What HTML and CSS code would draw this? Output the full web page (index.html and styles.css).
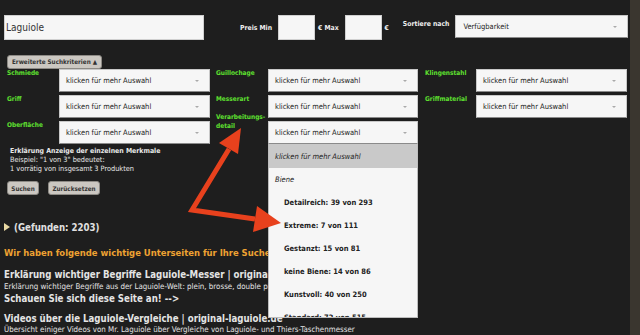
FILE: index.html
```html
<!DOCTYPE html>
<html lang="de">
<head>
<meta charset="utf-8">
<title>Laguiole Suche</title>
<link rel="stylesheet" href="styles.css">
</head>
<body>
<div class="page">
  <main class="main">
    <div class="toprow">
      <div class="field query">Laguiole</div>
      <span class="plabel first">Preis Min</span>
      <div class="field pbox"></div>
      <span class="plabel">€ Max</span>
      <div class="field pbox"></div>
      <span class="plabel">€</span>
      <span class="sortlabel">Sortiere nach</span>
      <div class="sel sort"><span>Verfügbarkeit</span><span class="arr"></span></div>
    </div>

    <div class="advrow"><span class="btn adv">Erweiterte Suchkriterien ▲</span></div>

    <div class="crit">
      <span class="lab">Schmiede</span>
      <div class="sel"><span>klicken für mehr Auswahl</span><span class="arr"></span></div>
      <span class="lab">Guillochage</span>
      <div class="sel w150"><span>klicken für mehr Auswahl</span><span class="arr"></span></div>
      <span class="lab">Klingenstahl</span>
      <div class="sel"><span>klicken für mehr Auswahl</span><span class="arr"></span></div>

      <span class="lab">Griff</span>
      <div class="sel"><span>klicken für mehr Auswahl</span><span class="arr"></span></div>
      <span class="lab">Messerart</span>
      <div class="sel w150"><span>klicken für mehr Auswahl</span><span class="arr"></span></div>
      <span class="lab">Griffmaterial</span>
      <div class="sel"><span>klicken für mehr Auswahl</span><span class="arr"></span></div>

      <span class="lab">Oberfläche</span>
      <div class="sel"><span>klicken für mehr Auswahl</span><span class="arr"></span></div>
      <span class="lab two">Verarbeitungs-<br>detail</span>
      <div class="sel w150 open"><span>klicken für mehr Auswahl</span><span class="arr"></span>
        <div class="drop">
          <div class="opt hi">klicken für mehr Auswahl</div>
          <div class="opt grp">Biene</div>
          <div class="opt item">Detailreich: 39 von 293</div>
          <div class="opt item">Extreme: 7 von 111</div>
          <div class="opt item">Gestanzt: 15 von 81</div>
          <div class="opt item">keine Biene: 14 von 86</div>
          <div class="opt item">Kunstvoll: 40 von 250</div>
          <div class="opt item">Standard: 72 von 515</div>
        </div>
      </div>
    </div>

    <div class="explain">
      <p class="ex-title">Erklärung Anzeige der einzelnen Merkmale</p>
      <p class="ex-body">Beispiel: "1 von 3" bedeutet:<br>1 vorrätig von insgesamt 3 Produkten</p>
    </div>

    <div class="btnrow">
      <span class="btn b1">Suchen</span>
      <span class="btn b2">Zurücksetzen</span>
    </div>

    <div class="found"><span class="tri"></span><span>(Gefunden: 2203)</span></div>

    <p class="sub">Wir haben folgende wichtige Unterseiten für Ihre Suche gefunden:</p>
    <p class="h">Erklärung wichtiger Begriffe Laguiole-Messer | original-laguiole.de</p>
    <p class="d">Erklärung wichtiger Begriffe aus der Laguiole-Welt: plein, brosse, double platines, forge und vieles mehr</p>
    <p class="h">Schauen Sie sich diese Seite an! --&gt;</p>
    <p class="h gap">Videos über die Laguiole-Vergleiche | original-laguiole.de</p>
    <p class="d">Übersicht einiger Videos von Mr. Laguiole über Vergleiche von Laguiole- und Thiers-Taschenmesser</p>

    <svg class="arrows" width="630" height="335" viewBox="0 0 630 335">
      <polyline points="229,149 192,210 255,219" fill="none" stroke="#e8411d" stroke-width="5" stroke-linejoin="miter"/>
      <polygon points="241,128 238,154 219,143" fill="#e8411d"/>
      <polygon points="281,223 253,232 257,206" fill="#e8411d"/>
    </svg>
  </main>
  <div class="strip"></div>
</div>
</body>
</html>
```

FILE: styles.css
```css
* { box-sizing: border-box; }
html, body { margin: 0; padding: 0; }
body {
  background: #1e1e1e;
  color: #e4e4e4;
  font-family: "DejaVu Sans Condensed", "DejaVu Sans", sans-serif;
  font-stretch: condensed;
  width: 640px;
  height: 335px;
  overflow: hidden;
}
p { margin: 0; }
.page { display: flex; height: 335px; }
.main { position: relative; flex: 1; padding-left: 4px; overflow: hidden; white-space: nowrap; }
.strip { width: 10px; background: #3a362f; }

.toprow { display: flex; align-items: center; padding-top: 15px; height: 40px; }
.field {
  background: #f6f6f6;
  border: 1px solid #d0d0d0;
  height: 25px;
}
.query { width: 200px; color: #333; font-size: 10px; padding-left: 1px; display: flex; align-items: center; }
.plabel { font-size: 6.8px; font-weight: bold; color: #eee; margin: 0 6px 0 3px; }
.plabel.first { margin-left: 36px; }
.pbox { width: 37px; }
.sortlabel { align-self: flex-start; margin: 5px 6px 0 8px; font-size: 6.8px; font-weight: bold; color: #eee; }

.sel {
  position: relative;
  width: 151px;
  height: 23px;
  background: #f6f6f6;
  border: 1px solid #c8c8c8;
  border-bottom-color: #8a8a8a;
  display: flex;
  align-items: center;
  justify-content: space-between;
  padding: 0 10px 0 6px;
  font-size: 7.5px;
  color: #222;
}
.sel.w150 { width: 150px; }
.sel.sort { width: 173px; padding-left: 7px; align-self: flex-start; }
.arr { width: 0; height: 0; border-left: 2px solid transparent; border-right: 2px solid transparent; border-top: 2px solid #aaa; }

.advrow { padding: 9px 0 0 3px; height: 23px; }
.btn {
  display: inline-flex;
  align-items: center;
  justify-content: center;
  height: 14px;
  background: #cbc7c1;
  border: 1px solid #8d8a85;
  border-radius: 3px;
  color: #333;
  font-size: 6.3px;
  font-weight: bold;
}
.adv { width: 95px; }
.b1 { width: 32px; }
.b2 { width: 52px; }

.crit {
  display: grid;
  grid-template-columns: 52px 157px 52px 157px 51px 151px;
  grid-auto-rows: 23px;
  row-gap: 3px;
  margin-top: 6px;
  padding-left: 3px;
}
.lab { color: #5fe030; font-size: 6.5px; font-weight: bold; line-height: 9px; margin-top: 0; }
.lab.two { margin-top: -8px; }

.drop {
  position: absolute;
  left: -1px;
  top: 22px;
  width: 150px;
  height: 174px;
  background: #f6f6f6;
  border: 1px solid #bdbdbd;
  border-top: none;
  overflow: hidden;
  z-index: 2;
}
.opt { height: 23px; display: flex; align-items: center; padding-left: 6px; font-size: 7.5px; color: #222; }
.opt.hi { background: #c9c9c9; font-style: italic; height: 24px; }
.opt.grp { font-style: italic; }
.opt.item { font-weight: bold; padding-left: 15px; }

.explain { padding-left: 6px; margin-top: 3px; color: #e8e8e8; }
.ex-title { line-height: 9px; font-size: 6.9px; font-weight: bold; }
.ex-body { line-height: 8.5px; font-size: 7.3px; }

.btnrow { display: flex; gap: 9px; padding-left: 3px; margin-top: 8px; }

.found { display: flex; align-items: center; margin-top: 25px; height: 14px; font-size: 9.6px; font-weight: bold; color: #e0e0e0; }
.tri { width: 0; height: 0; border-top: 4px solid transparent; border-bottom: 4px solid transparent; border-left: 6px solid #e9d9a3; margin-right: 4px; }

.sub { margin-top: 12px; line-height: 14px; font-size: 9.4px; font-weight: bold; color: #eea232; }
.h { line-height: 14px; font-size: 9.6px; font-weight: bold; color: #e4e4e4; }
.sub + .h { margin-top: 8px; }
.h.gap { margin-top: 6px; }
.d { line-height: 10px; font-size: 7.9px; color: #e4e4e4; }
.h.gap + .d { margin-top: -1px; }

.arrows { position: absolute; left: 0; top: 0; pointer-events: none; z-index: 3; }
```
